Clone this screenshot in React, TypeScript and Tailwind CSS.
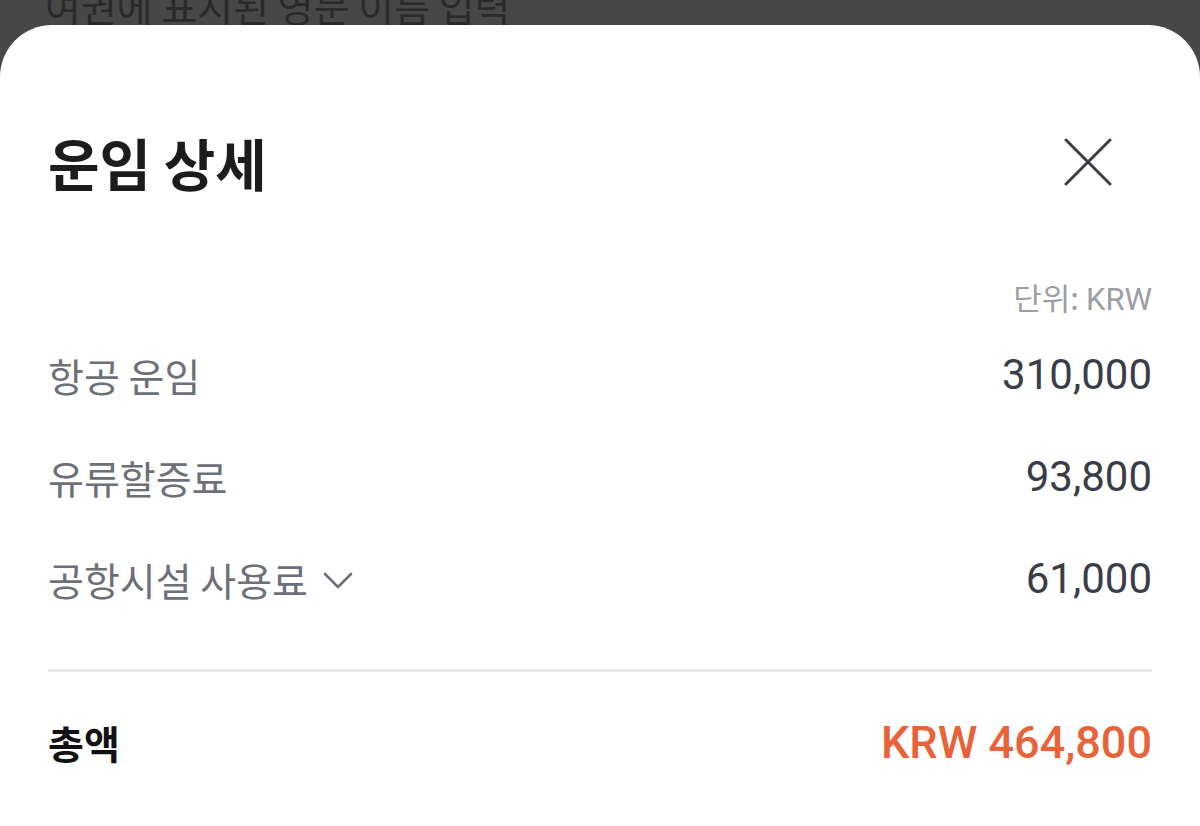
const kr = "font-['Noto_Sans_CJK_KR','Noto_Sans',sans-serif]";
const num = "font-['Roboto','Noto_Sans_CJK_KR',sans-serif]";

interface FareRowProps {
  label: string;
  amount: string;
  expandable?: boolean;
}

const FareRow = ({ label, amount, expandable = false }: FareRowProps) => {
  return (
    <div className="h-[102px] flex items-center justify-between">
      <div className="flex items-center gap-[14px]">
        <span className={`${kr} text-[39px] leading-none text-[#6d7079]`}>{label}</span>
        {expandable && (
          <svg width="32" height="20" viewBox="0 0 32 20" className="mt-1">
            <path d="M3 3 L16 16 L29 3" fill="none" stroke="#6d7079" strokeWidth="2.6" strokeLinecap="round" strokeLinejoin="round" />
          </svg>
        )}
      </div>
      <span className={`${num} text-[42px] leading-none text-[#3a3d48]`}>{amount}</span>
    </div>
  );
};

export default function App() {
  return (
    <div className="w-[1200px] h-[826px] bg-[#474747] flex flex-col overflow-hidden">
      {/* 뒤에 깔린 화면 (시트에 가려짐) */}
      <div className="h-[25px] overflow-hidden px-[45px]">
        <div className={`${kr} text-[39px] leading-none text-[#2a2a2a] -mt-[14px] whitespace-nowrap`}>
          여권에 표시된 영문 이름 입력
        </div>
      </div>

      {/* 바텀시트 */}
      <div className="flex-1 bg-white rounded-t-[52px] px-12 pt-[87px]">
        <div className="h-[100px] flex items-center justify-between">
          <h1 className={`${kr} text-[56px] font-bold leading-none text-[#1c1c1e]`}>운임 상세</h1>
          <svg width="48" height="48" viewBox="0 0 48 48" className="mr-[40px]">
            <path d="M2 2 L46 46 M46 2 L2 46" stroke="#3b3e4a" strokeWidth="3" strokeLinecap="round" />
          </svg>
        </div>

        <div className="mt-[66px] h-[40px] flex items-center justify-end">
          <span className={`${kr} text-[31px] leading-none text-[#9c9ea5]`}>
            단위: <span className={num}>KRW</span>
          </span>
        </div>

        <div className="mt-[6px]">
          <FareRow label="항공 운임" amount="310,000" />
          <FareRow label="유류할증료" amount="93,800" />
          <FareRow label="공항시설 사용료" amount="61,000" expandable />
        </div>

        <div className="mt-[39px] h-[3px] bg-[#e6e7eb]" />

        <div className="mt-[20px] h-[100px] flex items-center justify-between">
          <span className={`${kr} text-[39px] font-bold leading-none text-[#111113]`}>총액</span>
          <span className={`${num} text-[45px] font-medium leading-none text-[#e8633a]`}>KRW 464,800</span>
        </div>
      </div>
    </div>
  );
}
